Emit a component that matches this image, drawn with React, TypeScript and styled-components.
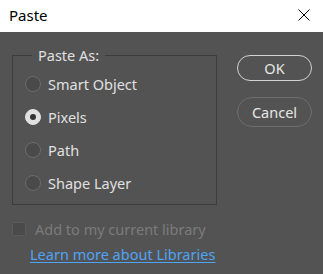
import { styled, createGlobalStyle } from "styled-components";

const GlobalStyle = createGlobalStyle`
    html, body {
        margin: 0;
        padding: 0;
        background: #535353;
    }
    body {
        font-family: "Noto Sans", "Liberation Sans", sans-serif;
    }
`

const Dialog = styled.div`
    width: 323px;
    height: 274px;
    display: flex;
    flex-direction: column;
    background: #535353;
    overflow: hidden;
`

const TitleBar = styled.div`
    height: 32px;
    flex: none;
    display: flex;
    align-items: center;
    justify-content: space-between;
    background: #fff;
    padding: 0 13px 0 9px;
    box-sizing: border-box;
`

const Title = styled.span`
    font-size: 15px;
    color: #000;
    line-height: 1;
    margin-top: -2px;
`

const CloseButton = styled.button`
    border: 0;
    background: none;
    padding: 0;
    width: 12px;
    height: 12px;
    display: flex;
    margin-top: -2px;
`

const Body = styled.div`
    display: flex;
    padding: 14px 11px 0 12px;
    gap: 20px;
`

const Column = styled.div`
    display: flex;
    flex-direction: column;
`

const Group = styled.fieldset`
    width: 205px;
    box-sizing: border-box;
    margin: 0;
    border: 1px solid #3d3d3d;
    padding: 2px 12px 5px 12px;
    min-inline-size: 0;
`

const Legend = styled.legend`
    margin-left: 7px;
    padding: 0 6px;
    color: #e0e0e0;
    font-size: 14.5px;
    line-height: 19px;
`

const Option = styled.label`
    height: 33px;
    display: flex;
    align-items: center;
    gap: 7px;
    color: #e0e0e0;
    font-size: 14.5px;
`

const Radio = styled.span<{ $checked?: boolean }>`
    width: 16px;
    height: 16px;
    box-sizing: border-box;
    border-radius: 50%;
    border: 1.5px solid ${(p) => (p.$checked ? "#e0e0e0" : "#6c6c6c")};
    background: ${(p) => (p.$checked ? "#e0e0e0" : "#4a4a4a")};
    display: flex;
    align-items: center;
    justify-content: center;
    &::after {
        content: "";
        width: 6px;
        height: 6px;
        border-radius: 50%;
        background: #333;
        display: ${(p) => (p.$checked ? "block" : "none")};
    }
`

const CheckRow = styled.label`
    display: flex;
    align-items: center;
    gap: 9px;
    margin-top: 14px;
    height: 20px;
    color: #7b7b7b;
    font-size: 14.5px;
`

const Checkbox = styled.span`
    width: 14px;
    height: 14px;
    box-sizing: border-box;
    border: 1px solid #5b5b5b;
    background: #4a4a4a;
    border-radius: 2px;
`

const LearnLink = styled.a`
    margin: 5px 0 0 18px;
    color: #4fa3f4;
    font-size: 14.5px;
    line-height: 20px;
    text-decoration: underline;
    text-underline-offset: 2px;
    align-self: flex-start;
`

const Buttons = styled.div`
    display: flex;
    flex-direction: column;
    gap: 16px;
    padding-top: 9px;
`

const Button = styled.button<{ $primary?: boolean }>`
    width: 75px;
    height: ${(p) => (p.$primary ? "26px" : "30px")};
    border-radius: 15px;
    background: transparent;
    border: 1.5px solid ${(p) => (p.$primary ? "#d2d2d2" : "#6e6e6e")};
    color: #e6e6e6;
    font-family: inherit;
    font-size: 14.5px;
    padding: 0;
`

const options = [
    { label: "Smart Object", checked: false },
    { label: "Pixels", checked: true },
    { label: "Path", checked: false },
    { label: "Shape Layer", checked: false },
]

export default function App() {
    return (
        <>
            <GlobalStyle />
            <Dialog>
                <TitleBar>
                    <Title>Paste</Title>
                    <CloseButton>
                        <svg width="12" height="12" viewBox="0 0 12 12">
                            <path d="M0.5 0.5 L11.5 11.5 M11.5 0.5 L0.5 11.5" stroke="#000" strokeWidth="1" />
                        </svg>
                    </CloseButton>
                </TitleBar>
                <Body>
                    <Column>
                        <Group>
                            <Legend>Paste As:</Legend>
                            {options.map((o) => (
                                <Option key={o.label}>
                                    <Radio $checked={o.checked} />
                                    {o.label}
                                </Option>
                            ))}
                        </Group>
                        <CheckRow>
                            <Checkbox />
                            Add to my current library
                        </CheckRow>
                        <LearnLink href="#">Learn more about Libraries</LearnLink>
                    </Column>
                    <Buttons>
                        <Button $primary>OK</Button>
                        <Button>Cancel</Button>
                    </Buttons>
                </Body>
            </Dialog>
        </>
    )
}
